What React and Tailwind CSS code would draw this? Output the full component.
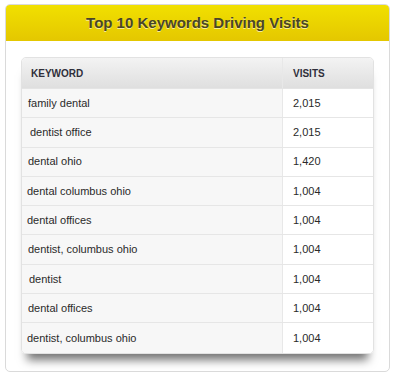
import React from "react";

const rows = [
  { keyword: "family dental", visits: "2,015", pad: "pl-[6px]" },
  { keyword: "dentist office", visits: "2,015", pad: "pl-[8px]" },
  { keyword: "dental ohio", visits: "1,420", pad: "pl-[6px]" },
  { keyword: "dental columbus ohio", visits: "1,004", pad: "pl-[5px]" },
  { keyword: "dental offices", visits: "1,004", pad: "pl-[5px]" },
  { keyword: "dentist, columbus ohio", visits: "1,004", pad: "pl-[6px]" },
  { keyword: "dentist", visits: "1,004", pad: "pl-[7px]" },
  { keyword: "dental offices", visits: "1,004", pad: "pl-[6px]" },
  { keyword: "dentist, columbus ohio", visits: "1,004", pad: "pl-[5px]" },
];

export default function App() {
  return (
    <div
      className="w-[395px] h-[375px] bg-white pt-[4px] pl-[5px]"
      style={{ fontFamily: '"Liberation Sans", Arial, sans-serif' }}
    >
      <div className="w-[385px] h-[368px] border border-[#dadada] rounded-[5px] bg-white overflow-hidden">
        {/* Yellow header */}
        <div className="h-[36px] flex items-center justify-center bg-gradient-to-b from-[#f1e000] to-[#e4c700]">
          <h1 className="text-[15px] font-bold text-[#4a4626] [text-shadow:0_1px_0_rgba(255,255,255,0.6)]">
            Top 10 Keywords Driving Visits
          </h1>
        </div>

        {/* Table */}
        <div className="px-[15px] pt-[16px]">
          <div className="rounded-[5px] border border-[#e2e2e2] overflow-hidden shadow-[0_12px_9px_-6px_rgba(0,0,0,0.55)]">
            <div className="flex h-[31px] bg-gradient-to-b from-[#f3f3f3] to-[#dfdfdf] border-b border-[#e4e4e4] text-[10px] font-bold text-[#2f2f3a]">
              <div className="w-[261px] flex items-center pl-[9px] border-r border-[#e8e8e8]">KEYWORD</div>
              <div className="flex-1 flex items-center pl-[10px]">VISITS</div>
            </div>
            {rows.map((row, i) => (
              <div
                key={i}
                className={`flex h-[29.3px] text-[11px] text-[#2a2a2a] ${
                  i < rows.length - 1 ? "border-b border-[#e6e6e6]" : ""
                }`}
              >
                <div className={`w-[261px] flex items-center bg-[#f7f7f7] border-r border-[#e8e8e8] ${row.pad}`}>
                  {row.keyword}
                </div>
                <div className="flex-1 flex items-center pl-[10px] bg-white">{row.visits}</div>
              </div>
            ))}
          </div>
        </div>
      </div>
    </div>
  );
}
